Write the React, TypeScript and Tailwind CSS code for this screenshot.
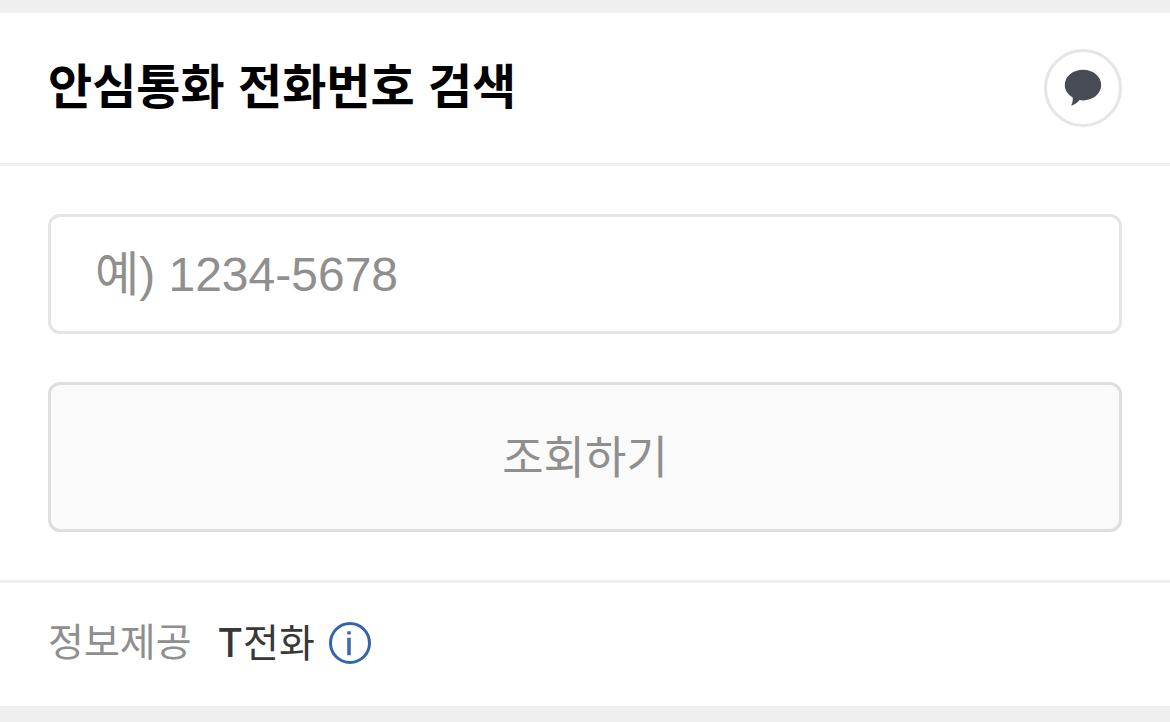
import { useState } from "react";

function SpeechBubbleIcon() {
  return (
    <svg viewBox="3 3 72 72" className="size-full" aria-hidden="true">
      <path
        d="M39 20.800c10.200 0 18.200 6.700 18.200 15.300s-8 15.300-18.200 15.300c-1.200 0-2.400-.1-3.500-.3-1.400 2-4 3.900-7.500 5.400-.6.200-.9-.2-.6-.7 1.200-1.900 1.600-4.500 1.300-7.400C23.800 45.700 20.800 41.200 20.800 36.100c0-8.600 8-15.300 18.200-15.300z"
        fill="#464b54"
      />
    </svg>
  );
}

function InfoIcon() {
  return (
    <svg viewBox="0 0 42 42" className="size-full" aria-hidden="true">
      <circle cx="21" cy="21" r="19.5" fill="none" stroke="#3563ae" strokeWidth="3" />
      <path d="M18.200 9.200h3.600v3.200h-3.600zM18.200 15.800h3.600v17.400h-3.600z" fill="#3f6bb3" />
    </svg>
  );
}

export default function App() {
  const [number, setNumber] = useState("");

  return (
    <div className="min-h-screen bg-[#efefef] py-[13px] font-['Liberation_Sans','Noto_Sans_CJK_KR',sans-serif]">
      <main className="bg-white">
        <header className="flex items-center justify-between border-b-3 border-[#efefef] px-12 py-9">
          <h1 className="text-[48px] leading-[72px] font-bold text-black">
            안심통화 전화번호 검색
          </h1>
          <button
            type="button"
            aria-label="의견 보내기"
            className="size-[78px] rounded-full border-3 border-[#e5e5e5] bg-white"
          >
            <SpeechBubbleIcon />
          </button>
        </header>

        <form className="flex flex-col gap-12 px-12 py-12" onSubmit={(e) => e.preventDefault()}>
          <input
            type="tel"
            aria-label="전화번호"
            placeholder="예) 1234-5678"
            value={number}
            onChange={(e) => setNumber(e.target.value)}
            className="h-[120px] w-full rounded-xl border-3 border-[#e5e5e5] bg-white px-11 text-[48px] text-black placeholder:text-[#8f8f8f]"
          />
          <button
            type="submit"
            className="h-[150px] w-full rounded-xl border-3 border-[#dedede] bg-[#fafafa] pt-1 text-[45px] text-[#8f8f8f]"
          >
            조회하기
          </button>
        </form>

        <footer className="flex items-center border-t-3 border-[#efefef] px-12 pt-[30px] pb-[34px] text-[39px] leading-[59px]">
          <span className="text-[#8f8f8f]">정보제공</span>
          <a
            href="#provider"
            className="ml-[26px] font-['Inter','Noto_Sans_CJK_KR',sans-serif] text-[#383838]"
          >
            <span className="font-medium">T</span>전화
          </a>
          <button type="button" aria-label="정보제공 안내" className="ml-[14px] size-[42px]">
            <InfoIcon />
          </button>
        </footer>
      </main>
    </div>
  );
}
